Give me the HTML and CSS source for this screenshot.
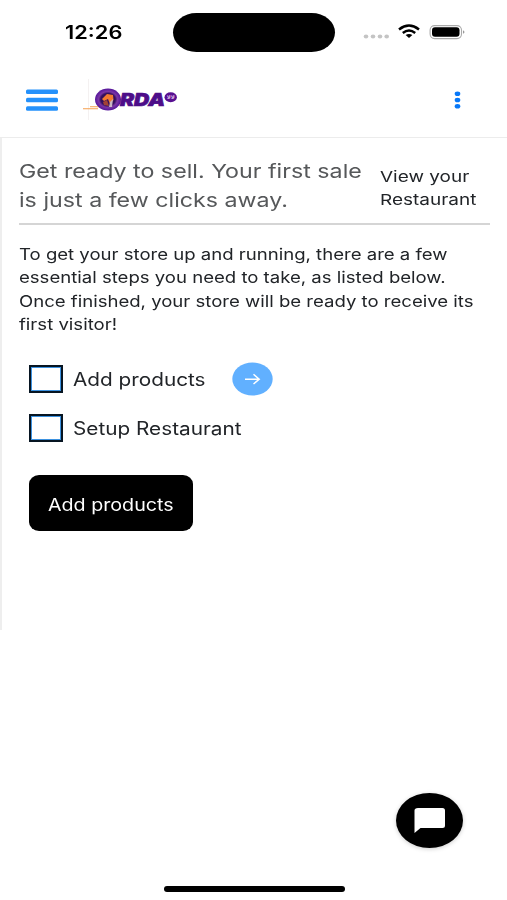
FILE: index.html
```html
<!DOCTYPE html>
<html lang="en">
<head>
<meta charset="utf-8">
<title>Orda</title>
<link rel="stylesheet" href="styles.css">
</head>
<body>
<div class="status">
  <div class="time"><span class="wide">12:26</span></div>
  <div class="island"></div>
  <svg class="indicators" width="104" height="20" viewBox="0 0 104 20">
    <g fill="#c4c4c4"><ellipse cx="3" cy="14.5" rx="2.3" ry="2"/><ellipse cx="10" cy="14.5" rx="2.3" ry="2"/><ellipse cx="17" cy="14.5" rx="2.3" ry="2"/><ellipse cx="23.700" cy="14.500" rx="2.300" ry="2"/></g>
    <g fill="none" stroke="#000" stroke-width="2.500"><path d="M36 7.400Q46 -.4 56 7.400"/><path d="M39.800 10.900Q46 6.100 52.200 10.900"/></g>
    <path d="M42.600 13.100Q46 10.700 49.400 13.100L46 16Z"/>
    <rect x="67.100" y="3.600" width="31.400" height="13" rx="4.500" fill="#fff" stroke="#aaa" stroke-width="1.100"/>
    <rect x="69" y="5.200" width="27.500" height="9.600" rx="3"/>
    <path d="M100 8.200Q103 10 100 11.800Z" fill="#999"/>
  </svg>
</div>
<header class="bar">
  <svg class="menu" width="32" height="22" viewBox="0 0 32 22"><g fill="#2491fb"><rect y=".4" width="32" height="4.500" rx="1.500"/><rect y="8.800" width="32" height="4.500" rx="1.500"/><rect y="17.200" width="32" height="4.500" rx="1.500"/></g></svg>
  <svg class="logo" width="98" height="42" viewBox="0 0 98 42">
    <defs><radialGradient id="ring"><stop offset="0" stop-color="#351061"/><stop offset=".55" stop-color="#34105c"/><stop offset=".72" stop-color="#7b36a6"/><stop offset="1" stop-color="#54149a"/></radialGradient></defs>
    <path d="M6.500 0V41" stroke="#f4f1f1"/>
    <path d="M1 29.800H16M8 27.700H17" stroke="#f6a04e" stroke-width="1.100"/>
    <ellipse cx="26" cy="20.500" rx="13" ry="11" fill="url(#ring)"/>
    <path d="M20 20L25 15L31 16L31.500 21L28 25L26 20L22 22Z" fill="#f47b30"/>
    <path d="M21 23L25 21L27 27L22 26Z" fill="#a34235"/><path d="M28 23L31 20L30 28L27 28Z" fill="#c9b6c4"/>
    <text class="wordmark" x="38" y="27.300" textLength="45" lengthAdjust="spacingAndGlyphs">RDA</text>
    <ellipse cx="88.700" cy="18.300" rx="6.200" ry="5" fill="#571091"/>
    <text class="mini" x="84.700" y="20" textLength="8" lengthAdjust="spacingAndGlyphs">لالا</text>
  </svg>
  <svg class="more" width="8" height="20" viewBox="0 0 8 20" fill="#0878f8"><ellipse cx="3.500" cy="3.700" rx="2.800" ry="2.300"/><ellipse cx="3.500" cy="10" rx="2.800" ry="2.300"/><ellipse cx="3.500" cy="16.300" rx="2.800" ry="2.300"/></svg>
</header>
<main class="page">
  <section class="intro">
    <h1 class="wide">Get ready to sell. Your first sale<br>is just a few clicks away.</h1>
    <a class="view wide">View your<br>Restaurant</a>
  </section>
  <p class="copy wide">To get your store up and running, there are a few<br>essential steps you need to take, as listed below.<br>Once finished, your store will be ready to receive its<br>first visitor!</p>
  <ul class="steps">
    <li><i class="box"></i><span class="label wide">Add products</span>
      <svg class="go" width="41" height="34" viewBox="0 0 41 34"><ellipse cx="20.500" cy="17" rx="20.200" ry="16.500" fill="#61b0ff"/><path d="M13 17.200H27M21.500 12.300L27.200 17.200L21.500 22" fill="none" stroke="#fff" stroke-width="1.500"/></svg></li>
    <li><i class="box"></i><span class="label wide">Setup Restaurant</span></li>
  </ul>
  <button class="add"><span class="wide">Add products</span></button>
</main>
<footer class="bottom">
  <svg class="chat" width="67" height="55" viewBox="0 0 67 55"><ellipse cx="33.500" cy="27.500" rx="33.500" ry="27.500"/><path d="M22 15H46.500Q49 15 49 17.500V32.500Q49 35 46.500 35H24.500L18.500 40V17.500Q18.500 15 22 15Z" fill="#fff"/></svg>
  <div class="home"></div>
</footer>
</body>
</html>
```

FILE: styles.css
```css
* { box-sizing: border-box; }
body { margin: 0; width: 507px; height: 900px; display: flex; flex-direction: column; background: #fff; color: #212428; font-family: Inter, "Liberation Sans", sans-serif; overflow: hidden; }
.wide { display: block; white-space: nowrap; transform-origin: left center; transform: scaleX(var(--stretch, 1.2)); }
.status { height: 64px; display: grid; grid-template-columns: 173px 162px 172px; align-items: start; }
.time { --stretch: 1.18; padding: 20px 0 0 65px; font-size: 18.500px; line-height: 24px; font-weight: 600; color: #000; }
.island { height: 39px; margin-top: 13px; border-radius: 24px / 20px; background: #000; }
.indicators { margin: 22px 0 0 28px; }
.bar { height: 74px; flex: none; display: flex; align-items: center; padding: 0 45px 2px 26px; border-bottom: 1px solid #ececec; }
.logo { margin-left: 24px; }
.more { margin-left: auto; }
.wordmark { font: italic 900 18px Inter, sans-serif; fill: #4d0d89; stroke: #4d0d89; stroke-width: .7px; }
.mini { font: 700 5px "DejaVu Sans", sans-serif; fill: #e6cbed; }
.page { height: 492px; flex: none; border-left: 2px solid #eee; padding: 0 17px; }
.intro { height: 87px; display: grid; grid-template-columns: 361px 1fr; border-bottom: 2px solid #d5d5d5; }
h1 { --stretch: 1.222; width: 280px; margin: 20px 0 0; font-size: 19px; line-height: 28.500px; font-weight: 400; color: #56585a; }
.view { --stretch: 1.265; width: 80px; margin-top: 28px; font-size: 15px; line-height: 22.500px; }
.copy { --stretch: 1.16; width: 380px; margin: 18px 0 0; font-size: 16px; line-height: 23.300px; }
.steps { list-style: none; margin: 18px 0 0; padding: 0 0 0 10px; }
.steps li { display: flex; align-items: center; height: 49px; }
.box { width: 34px; height: 28px; border: 2px solid #071522; box-shadow: inset 0 0 0 1px #3d92e0; }
.label { --stretch: 1.153; width: 159px; margin: 2px 0 0 10px; font-size: 18px; }
.go { margin-left: 0; }
.add { display: block; width: 164px; height: 56px; margin: 23px 0 0 10px; padding: 3px 0 0 19px; border: 0; border-radius: 10px / 9px; background: #000; color: #fff; font: 17px Inter, sans-serif; text-align: left; }
.add .wide { --stretch: 1.157; }
.bottom { flex: 1; display: flex; flex-direction: column; padding-top: 163px; }
.chat { align-self: flex-end; margin-right: 44px; flex: none; filter: drop-shadow(0 1px 2px #0003); overflow: visible; }
.home { width: 181px; height: 6px; margin: 38px 0 0 164px; border-radius: 3px; background: #000; }
```
